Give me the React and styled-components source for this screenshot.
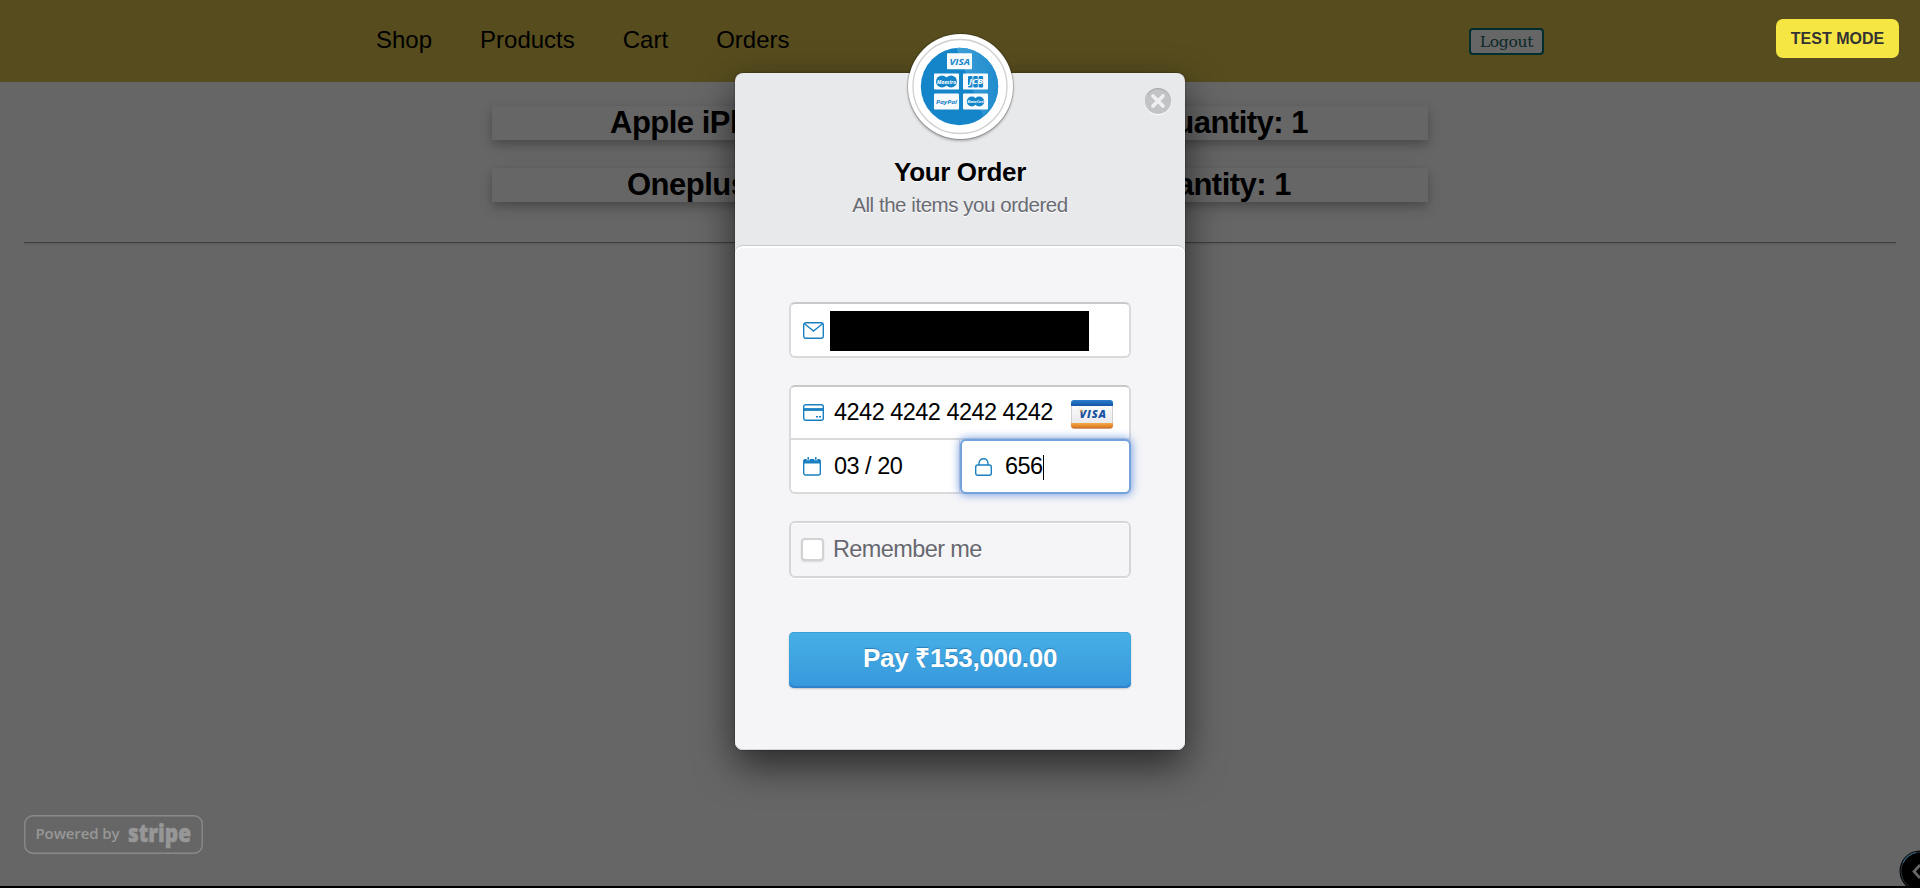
import React from "react";
import styled, { createGlobalStyle } from "styled-components";

const Global = createGlobalStyle`
  * { box-sizing: border-box; }
  body {
    margin: 0;
    background: #fff;
    font-family: "Liberation Sans", Arial, sans-serif;
    overflow: hidden;
  }
`;

const Page = styled.div`
  position: relative;
  height: 888px;
  border-bottom: 2px solid #000;
  overflow: hidden;
`;

const NavBar = styled.header`
  display: flex;
  align-items: flex-start;
  justify-content: space-between;
  height: 82px;
  padding: 26px 376px 0;
  background: #d7be4b;
`;

const NavLinks = styled.nav`
  display: flex;
  gap: 48px;
`;

const NavLink = styled.a`
  font-size: 24px;
  line-height: 28px;
  color: #000;
`;

const LogoutButton = styled.button`
  width: 75px;
  height: 27px;
  margin-top: 2px;
  padding: 0;
  border: 2px solid #007070;
  border-radius: 4px;
  background: #fff;
  color: #1c6464;
  font: 15.5px/22px "DejaVu Serif", serif;
  letter-spacing: -0.3px;
`;

const OrderList = styled.main`
  display: flex;
  flex-direction: column;
  align-items: center;
  gap: 28px;
  margin: 24px 24px 0;
  padding-bottom: 40px;
  border-bottom: 1px solid #9a9a9a;
  box-shadow: 0 2px 0 #eee;
`;

const OrderItem = styled.h2`
  display: flex;
  justify-content: space-between;
  width: 936px;
  height: 34px;
  margin: 0;
  padding: 0 ${(p) => p.$inset + 2}px 0 ${(p) => p.$inset}px;
  font-size: 31px;
  line-height: 34px;
  letter-spacing: -0.5px;
  box-shadow: 0 4px 8px rgba(0, 0, 0, 0.2), 0 6px 20px rgba(0, 0, 0, 0.12);
`;

const CornerBadge = styled.div`
  position: absolute;
  left: 1899px;
  top: 850px;
  width: 42px;
  height: 42px;
`;

const Overlay = styled.div`
  position: absolute;
  inset: 0;
  display: flex;
  justify-content: center;
  align-items: flex-start;
  padding-top: 73px;
  background: rgba(0, 0, 0, 0.6);
`;

const TestMode = styled.div`
  position: absolute;
  top: 19px;
  right: 21px;
  width: 123px;
  height: 39px;
  border-radius: 7px;
  background: #f6e644;
  color: #333;
  font-size: 16px;
  font-weight: bold;
  line-height: 39px;
  text-align: center;
`;

const StripeBadge = styled.div`
  position: absolute;
  left: 24px;
  top: 815px;
  width: 179px;
  height: 39px;
`;

const Modal = styled.section`
  position: relative;
  width: 450px;
  height: 677px;
  border-radius: 8px;
  background: #e8e9eb;
  box-shadow: 0 15px 38px rgba(0, 0, 0, 0.6), 0 0 2px rgba(0, 0, 0, 0.5);
`;

const ModalHeader = styled.header`
  height: 172px;
  padding-top: 83px;
  text-align: center;
  text-shadow: 0 1px 0 #fff;
`;

const Title = styled.h1`
  margin: 0;
  font-size: 26px;
  line-height: 32px;
  letter-spacing: -0.35px;
  color: #000;
`;

const Subtitle = styled.p`
  margin: 4px 0 0;
  font-size: 20.5px;
  line-height: 26px;
  letter-spacing: -0.45px;
  color: #696a72;
`;

const LogoDisc = styled.div`
  position: absolute;
  left: 173px;
  top: -39px;
  width: 105px;
  height: 105px;
  border-radius: 50%;
  background: #fff;
  box-shadow: 0 0 0 1px rgba(0, 0, 0, 0.18), 0 2px 3px rgba(0, 0, 0, 0.28);
`;

const CloseButton = styled.button`
  position: absolute;
  top: 15px;
  right: 14px;
  display: flex;
  width: 26px;
  height: 26px;
  padding: 0;
  border: 0;
  border-radius: 50%;
  background: #c2c3c5;
  box-shadow: inset 0 1px 1px rgba(0, 0, 0, 0.15), 0 1px 0 #fff;
`;

const ModalBody = styled.div`
  display: flex;
  flex-direction: column;
  height: 505px;
  padding: 56px 54px 0;
  border-top: 1px solid #c9cacc;
  border-radius: 8px;
  background: #f5f5f7;
  box-shadow: inset 0 2px 0 #fff, inset 0 -1px 0 #d6d6d8;
`;

const FieldBox = styled.div`
  display: flex;
  align-items: center;
  height: 56px;
  padding-left: 12px;
  border: 2px solid #dadadc;
  border-top-color: #c8c8ca;
  border-radius: 6px;
  background: #fff;
`;

const Redacted = styled.div`
  width: 259px;
  height: 40px;
  margin: 2px 0 0 6px;
  background: #000;
`;

const CardBox = styled.div`
  height: 109px;
  margin-top: 27px;
  border: 2px solid #dadadc;
  border-top-color: #c8c8ca;
  border-radius: 6px;
  background: #fff;
`;

const CardRow = styled.div`
  display: flex;
  align-items: center;
  height: 53px;
  padding: 0 16px 0 12px;
  border-bottom: 2px solid #dadadc;
`;

const CardSplit = styled.div`
  display: flex;
  height: 52px;
`;

const ExpiryField = styled.div`
  display: flex;
  align-items: center;
  width: 169px;
  padding-left: 12px;
  border-right: 1px solid #dadadc;
`;

const CvcField = styled.div`
  display: flex;
  align-items: center;
  width: 171px;
  height: 55px;
  margin: -1px -2px 0 0;
  padding-left: 13px;
  border: 2px solid #74a3dc;
  border-radius: 6px;
  background: #fff;
  box-shadow: 0 0 8px 1px rgba(84, 133, 220, 0.75);
`;

const FieldText = styled.span`
  margin-left: ${(p) => p.$gap || 10}px;
  margin-bottom: ${(p) => p.$lift || 0}px;
  font-size: 23.5px;
  line-height: 28px;
  letter-spacing: -0.52px;
  color: #000;
  white-space: nowrap;
`;

const Caret = styled.span`
  width: 1px;
  height: 25px;
  margin-top: 1px;
  background: #000;
`;

const VisaCard = styled.svg`
  margin: 4px 0 0 auto;
`;

const Remember = styled.label`
  display: flex;
  align-items: center;
  height: 57px;
  margin-top: 27px;
  padding-left: 10px;
  border: 2px solid #d6d6d9;
  border-radius: 6px;
  box-shadow: 0 1px 0 #fff, inset 0 1px 0 #fff;
  color: #67686f;
  font-size: 23.5px;
  letter-spacing: -0.6px;
  text-shadow: 0 1px 0 #fff;
`;

const Checkbox = styled.span`
  width: 23px;
  height: 23px;
  margin-right: 9px;
  border: 2px solid #d2d2d4;
  border-radius: 4px;
  background: #fff;
  box-shadow: 0 1px 2px rgba(0, 0, 0, 0.12);
`;

const PayButton = styled.button`
  height: 56px;
  margin-top: 54px;
  padding: 0 0 4px;
  border: 0;
  border-radius: 5px;
  background: linear-gradient(#47b0e6, #3798dc);
  box-shadow: inset 0 1px 0 #3c9fd4, inset 0 -2px 1px #3082c8, 0 1px 2px rgba(0, 0, 0, 0.2);
  color: #fff;
  font: bold 26px/30px "Liberation Sans", Arial, sans-serif;
  letter-spacing: -0.3px;
  text-shadow: 0 -1px 1px rgba(20, 90, 150, 0.5);
`;

const blue = "#1a80c1";

const MailIcon = () => (
  <svg width="21" height="17" viewBox="0 0 21 17" fill="none" stroke={blue} strokeWidth="1.4">
    <rect x=".7" y=".7" width="19.6" height="15.6" rx="2.2" />
    <path d="M1.5 1.7l9 7.3 9-7.3" />
  </svg>
);

const CardIcon = () => (
  <svg width="21" height="17" viewBox="0 0 21 17" fill="none" stroke={blue} strokeWidth="1.4">
    <rect x=".7" y=".7" width="19.6" height="15.6" rx="2" />
    <path d="M1 5.5h19" strokeWidth="2.8" />
    <path d="M13 12.8h2M16 12.8h2" />
  </svg>
);

const CalendarIcon = () => (
  <svg width="18" height="19" viewBox="0 0 18 19" fill="none">
    <rect x=".7" y="3" width="16.6" height="15" rx="2" stroke={blue} strokeWidth="1.4" />
    <path d="M.3 6.500V4Q.3 2 2 2h14q1.700 0 1.700 2v2.500z" fill={blue} />
    <path d="M5.200 1v2.200M12.800 1v2.200" stroke="#fff" strokeWidth="3" />
    <path d="M5.200 0v2.800M12.800 0v2.800" stroke={blue} strokeWidth="1.500" />
  </svg>
);

const LockIcon = () => (
  <svg width="17" height="18" viewBox="0 0 17 18" fill="none" stroke={blue} strokeWidth="1.4">
    <rect x=".7" y="7" width="15.6" height="10.3" rx="2" />
    <path d="M4 7V5.5C4 2.6 6 .8 8.5 .8S13 2.6 13 5.5V7" />
  </svg>
);

const VisaIcon = () => (
  <VisaCard width="42" height="29" viewBox="0 0 42 29">
    <defs>
      <linearGradient id="cardFace" x2="0" y2="1">
        <stop stopColor="#fff" />
        <stop offset="1" stopColor="#e4e4e7" />
      </linearGradient>
      <linearGradient id="cardBlue" x2="0" y2="1">
        <stop stopColor="#2c7fce" />
        <stop offset="1" stopColor="#1253a4" />
      </linearGradient>
      <linearGradient id="cardGold" x2="0" y2="1">
        <stop stopColor="#f5aa47" />
        <stop offset="1" stopColor="#d36d1c" />
      </linearGradient>
    </defs>
    <rect x=".5" y=".5" width="41" height="28" rx="3" fill="url(#cardFace)" stroke="#d0d0d4" />
    <path d="M0 6V3Q0 0 3 0h36q3 0 3 3v3z" fill="url(#cardBlue)" />
    <path d="M0 23v2.500q0 3 3 3h36q3 0 3-3V23z" fill="url(#cardGold)" />
    <text x="8.500" y="18" textLength="26.500" fontFamily="Open Sans" fontSize="11" fontWeight="800" fontStyle="italic" fill="#1751a3">VISA</text>
    <path d="M8 9.700h3l1 4q-1.300-3-4-4z" fill="#f2a33c" />
  </VisaCard>
);

const PaymentLogo = () => (
  <svg width="105" height="105" viewBox="0 0 105 105" fontFamily="Open Sans" fontStyle="italic" fontWeight="700">
    <defs>
      <clipPath id="disc">
        <circle cx="51.500" cy="52.500" r="38.700" />
      </clipPath>
      <linearGradient id="glare" x1="0" x2="1">
        <stop stopColor="#3da0d8" />
        <stop offset="1" stopColor="#1f8bcd" />
      </linearGradient>
    </defs>
    <circle cx="52" cy="52.500" r="47" fill="none" stroke="#cfcfcf" strokeWidth="1.300" />
    <g clipPath="url(#disc)">
      <path d="M12 13h79v79H12z" fill="#1585ca" />
      <path d="M48 13l24 62 8 17h12V13z" fill="url(#glare)" />
    </g>
    <g fill="#f7fbfe">
      <rect x="39" y="19.300" width="25" height="16" rx=".8" />
      <rect x="26" y="39.600" width="25" height="16" rx=".8" />
      <rect x="55" y="39.600" width="25" height="16" rx=".8" />
      <rect x="26" y="59.600" width="25" height="16" rx=".8" />
      <rect x="55" y="59.600" width="25" height="16" rx=".8" />
    </g>
    <g fill="#1585ca">
      <circle cx="34" cy="47.500" r="6" />
      <circle cx="43" cy="47.500" r="6" />
      <rect x="60" y="42" width="4.500" height="11.500" rx="1" />
      <rect x="65.300" y="42" width="4.500" height="11.500" rx="1" />
      <rect x="70.600" y="42" width="4.500" height="11.500" rx="1" />
      <circle cx="63.800" cy="67.500" r="5" />
      <circle cx="71.200" cy="67.500" r="5" />
      <text x="41.500" y="30.700" fontSize="9.500" textLength="20.500" lengthAdjust="spacingAndGlyphs">VISA</text>
      <text x="28" y="69.500" fontSize="6" textLength="21" lengthAdjust="spacingAndGlyphs">PayPal</text>
    </g>
    <g fill="#fff">
      <text x="29" y="49.500" fontSize="5" textLength="19" lengthAdjust="spacingAndGlyphs">Maestro</text>
      <text x="61" y="50.300" fontSize="7" textLength="14" lengthAdjust="spacingAndGlyphs">JCB</text>
      <text x="59.500" y="69" fontSize="3.500" textLength="16" lengthAdjust="spacingAndGlyphs">MasterCard</text>
    </g>
  </svg>
);

export default function App() {
  return (
    <Page>
      <Global />
      <NavBar>
        <NavLinks>
          <NavLink>Shop</NavLink>
          <NavLink>Products</NavLink>
          <NavLink>Cart</NavLink>
          <NavLink>Orders</NavLink>
        </NavLinks>
        <LogoutButton>Logout</LogoutButton>
      </NavBar>
      <OrderList>
        <OrderItem $inset={118}>
          <span>Apple iPhone</span>
          <span>Quantity: 1</span>
        </OrderItem>
        <OrderItem $inset={135}>
          <span>Oneplus</span>
          <span>Quantity: 1</span>
        </OrderItem>
      </OrderList>
      <CornerBadge>
        <svg width="42" height="42" viewBox="0 0 42 42" fill="none">
          <circle cx="21" cy="21" r="20.500" fill="#000" />
          <circle cx="21" cy="21" r="19" stroke="#6b8794" strokeWidth="1" />
          <path d="M4 13A19 19 0 0 1 17 2.500" stroke="#79cfff" strokeWidth="1.500" />
          <path d="M21 15l-6 6.500 6 6.500" stroke="#fff" strokeWidth="2.800" />
        </svg>
      </CornerBadge>

      <Overlay>
        <Modal>
          <ModalHeader>
            <Title>Your Order</Title>
            <Subtitle>All the items you ordered</Subtitle>
          </ModalHeader>
          <ModalBody>
            <FieldBox>
              <MailIcon />
              <Redacted />
            </FieldBox>
            <CardBox>
              <CardRow>
                <CardIcon />
                <FieldText $lift={2}>4242 4242 4242 4242</FieldText>
                <VisaIcon />
              </CardRow>
              <CardSplit>
                <ExpiryField>
                  <CalendarIcon />
                  <FieldText $gap={13}>03 / 20</FieldText>
                </ExpiryField>
                <CvcField>
                  <LockIcon />
                  <FieldText $gap={13} $lift={2}>656</FieldText>
                  <Caret />
                </CvcField>
              </CardSplit>
            </CardBox>
            <Remember>
              <Checkbox />
              Remember me
            </Remember>
            <PayButton>Pay ₹153,000.00</PayButton>
          </ModalBody>
          <LogoDisc>
            <PaymentLogo />
          </LogoDisc>
          <CloseButton aria-label="Close">
            <svg width="26" height="26" viewBox="0 0 26 26" stroke="#f0f0f2" strokeWidth="3.600" strokeLinecap="round">
              <path d="M8 8l10 10M18 8L8 18" />
            </svg>
          </CloseButton>
        </Modal>
        <TestMode>TEST MODE</TestMode>
        <StripeBadge>
          <svg width="179" height="39" viewBox="0 0 179 39">
            <rect x=".8" y=".8" width="177.400" height="37.400" rx="8" fill="none" stroke="#8a8a8a" strokeWidth="1.400" />
            <g fill="#979797" fontFamily="Open Sans">
              <text x="11.500" y="24" fontSize="15" fontWeight="600" textLength="84">Powered by</text>
              <text x="104" y="26.500" fontSize="25" fontWeight="800" textLength="63" lengthAdjust="spacingAndGlyphs" stroke="#979797" strokeWidth=".6">stripe</text>
            </g>
          </svg>
        </StripeBadge>
      </Overlay>
    </Page>
  );
}
